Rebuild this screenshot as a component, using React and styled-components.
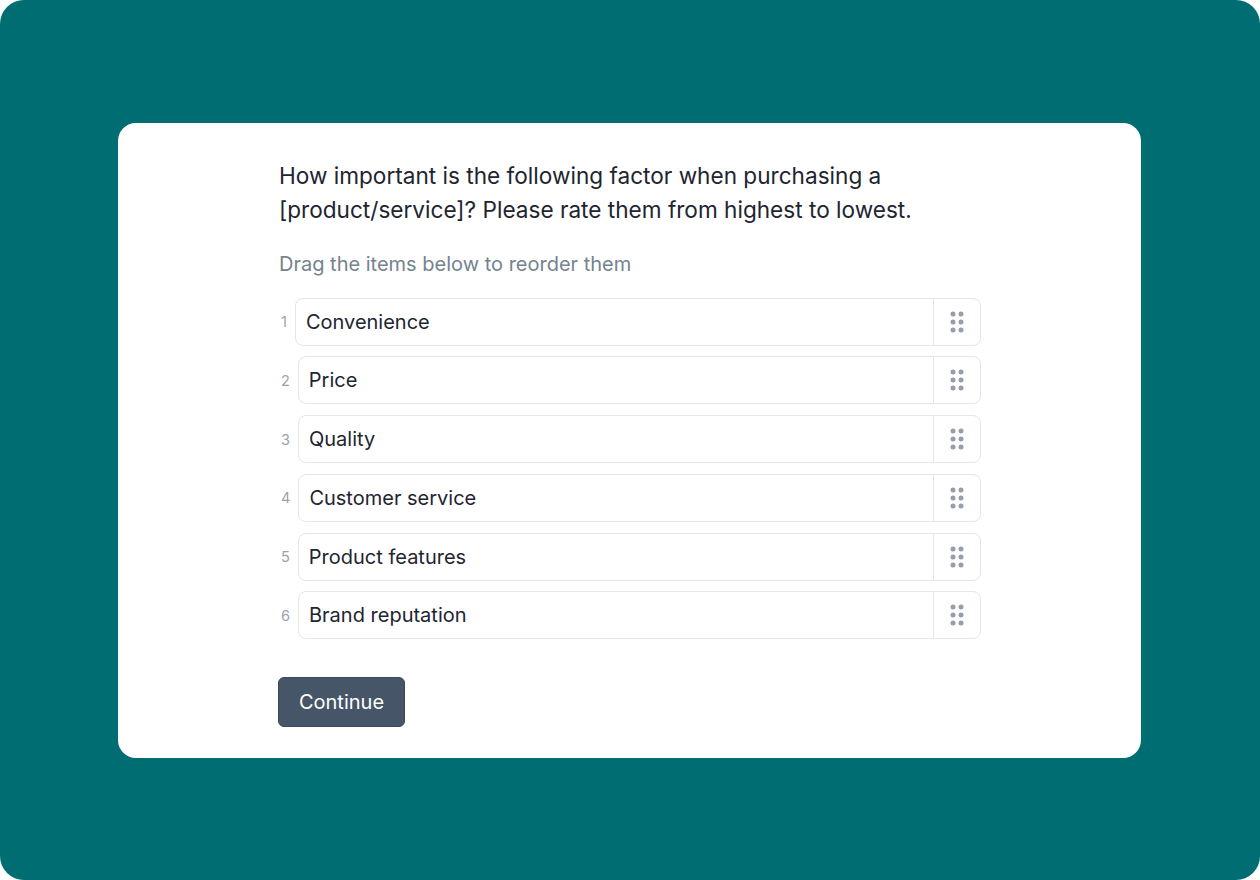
import React from 'react';
import styled, { createGlobalStyle } from 'styled-components';

const GlobalStyle = createGlobalStyle`
  html, body {
    margin: 0;
    padding: 0;
    background: #ffffff;
  }
  body {
    font-family: Inter, "Noto Sans", sans-serif;
  }
`;

const Frame = styled.div`
  width: 1260px;
  height: 880px;
  background: #006d72;
  border-radius: 24px;
  display: flex;
  align-items: center;
  justify-content: center;
`;

const Card = styled.div`
  width: 1023px;
  height: 635px;
  margin-left: -1px;
  box-sizing: border-box;
  background: #ffffff;
  border-radius: 18px;
  padding: 36px 0 30px 1px;
  display: flex;
  justify-content: center;
`;

const Content = styled.div`
  width: 702px;
  display: flex;
  flex-direction: column;
`;

const Question = styled.h2`
  margin: 0;
  font-size: 22.6px;
  font-weight: 400;
  line-height: 34px;
  color: #1e2530;
`;

const Hint = styled.p`
  margin: 23px 0 20px;
  font-size: 20px;
  line-height: 28px;
  color: #75838f;
`;

const List = styled.ol`
  list-style: none;
  margin: 0;
  padding: 0;
  display: flex;
  flex-direction: column;
  gap: 10.8px;
`;

const Row = styled.li`
  display: flex;
  align-items: center;
  gap: 8px;
`;

const Index = styled.span`
  font-size: 14.5px;
  color: #9aa3ad;
  margin-left: 2px;
`;

const Item = styled.div`
  flex: 1;
  height: 48px;
  box-sizing: border-box;
  border: 1px solid #e3e6ea;
  border-radius: 8px;
  display: flex;
  align-items: stretch;
  background: #fff;
`;

const Label = styled.span`
  flex: 1;
  display: flex;
  align-items: center;
  padding-left: 10px;
  font-size: 20px;
  color: #1e2530;
`;

const Handle = styled.span`
  width: 46px;
  border-left: 1px solid #e3e6ea;
  display: flex;
  align-items: center;
  justify-content: center;
  cursor: grab;
`;

const Button = styled.button`
  align-self: flex-start;
  margin-top: 38px;
  margin-left: -1px;
  width: 127px;
  height: 50px;
  border: 1px solid #3a4757;
  border-radius: 6px;
  background: #465567;
  color: #ffffff;
  font-family: Inter, "Noto Sans", sans-serif;
  font-size: 20px;
  cursor: pointer;
`;

const Grip = () => (
  <svg width="14" height="22" viewBox="0 0 14 22">
    {[3, 11, 19].map(y =>
      [3, 11].map(x => <circle key={`${x}-${y}`} cx={x} cy={y} r="2.5" fill="#959ea9" />)
    )}
  </svg>
);

const items = [
  'Convenience',
  'Price',
  'Quality',
  'Customer service',
  'Product features',
  'Brand reputation',
];

const App = () => (
  <>
    <GlobalStyle />
    <Frame>
      <Card>
        <Content>
          <Question>
            How important is the following factor when purchasing a
            [product/service]? Please rate them from highest to lowest.
          </Question>
          <Hint>Drag the items below to reorder them</Hint>
          <List>
            {items.map((item, i) => (
              <Row key={item}>
                <Index>{i + 1}</Index>
                <Item>
                  <Label>{item}</Label>
                  <Handle>
                    <Grip />
                  </Handle>
                </Item>
              </Row>
            ))}
          </List>
          <Button>Continue</Button>
        </Content>
      </Card>
    </Frame>
  </>
);

export default App;
